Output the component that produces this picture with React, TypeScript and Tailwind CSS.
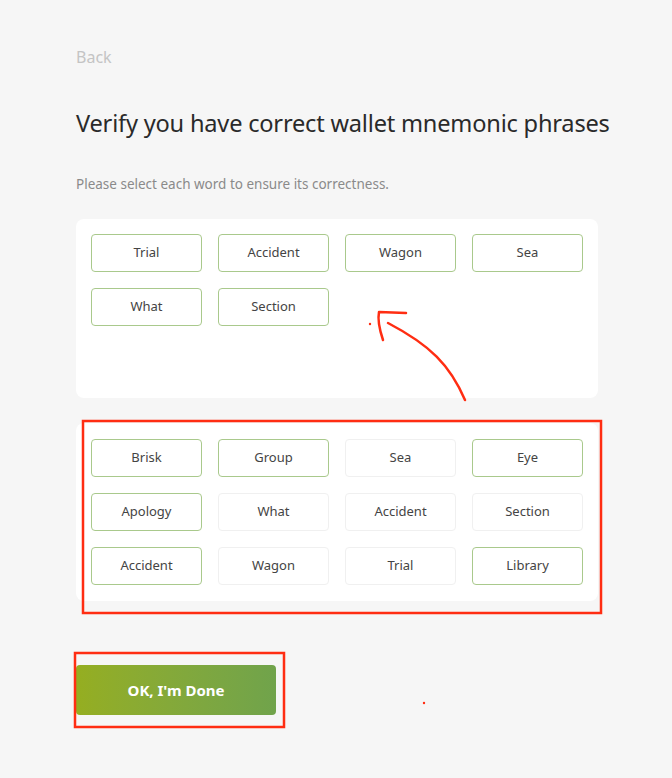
import React from "react";

const top = ["Trial", "Accident", "Wagon", "Sea", "What", "Section"];
const bottom: [string, boolean][] = [
  ["Brisk", false],
  ["Group", false],
  ["Sea", true],
  ["Eye", false],
  ["Apology", false],
  ["What", true],
  ["Accident", true],
  ["Section", true],
  ["Accident", false],
  ["Wagon", true],
  ["Trial", true],
  ["Library", false],
];

function Word({ label, used }: { label: string; used?: boolean }) {
  return (
    <div
      className={
        "h-[38px] rounded-[4px] flex items-center justify-center text-[13px] text-[#444] bg-white " +
        (used ? "border border-[#f0f0f0]" : "border-[1.5px] border-[#a9c98c]")
      }
    >
      {label}
    </div>
  );
}

export default function App() {
  return (
    <div
      className="relative w-[672px] h-[778px] bg-[#f6f6f6] overflow-hidden"
      style={{ fontFamily: '"Noto Sans", "Open Sans", sans-serif' }}
    >
      <div className="flex flex-col pl-[76px] pr-[74px] pt-[45px]">
        <div className="text-[16px] leading-[24px] text-[#c4c4c4]">Back</div>
        <h1 className="mt-[37px] text-[23.6px] leading-[34px] text-[#2a2a2a] whitespace-nowrap tracking-[-0.2px]">
          Verify you have correct wallet mnemonic phrases
        </h1>
        <p className="mt-[34px] text-[13.5px] leading-[20px] text-[#8a8a8a]">
          Please select each word to ensure its correctness.
        </p>
        <div className="mt-[25px] w-[522px] min-h-[179px] bg-white rounded-[8px] p-[15px] grid grid-cols-4 gap-x-[16px] gap-y-[16px] content-start">
          {top.map((w, i) => (
            <Word key={i} label={w} />
          ))}
        </div>
        <div className="mt-[25px] w-[522px] bg-white rounded-[8px] px-[15px] py-[16px] grid grid-cols-4 gap-x-[16px] gap-y-[16px]">
          {bottom.map(([w, u], i) => (
            <Word key={i} label={w} used={u} />
          ))}
        </div>
        <button className="mt-[64px] w-[200px] h-[50px] rounded-[4px] bg-gradient-to-r from-[#95ae20] to-[#70a34b] text-white font-bold text-[15px] flex items-center justify-center">
          OK, I'm Done
        </button>
      </div>

      <svg className="absolute inset-0 pointer-events-none" width="672" height="778" viewBox="0 0 672 778">
        <rect x="83" y="421" width="518" height="192" fill="none" stroke="#ff2d12" strokeWidth="2.5" />
        <rect x="75" y="653" width="209" height="74" fill="none" stroke="#ff2d12" strokeWidth="2.5" />
        <path d="M465 400 C 450 365, 430 345, 388 323" fill="none" stroke="#ff2d12" strokeWidth="2.5" strokeLinecap="round" />
        <path d="M406 313 L 379 312 Q 377 322, 383 340" fill="none" stroke="#ff2d12" strokeWidth="2.5" strokeLinecap="round" strokeLinejoin="round" />
        <circle cx="370" cy="324" r="1.2" fill="#ff2d12" />
        <circle cx="424" cy="703" r="1.2" fill="#ff2d12" />
      </svg>
    </div>
  );
}
